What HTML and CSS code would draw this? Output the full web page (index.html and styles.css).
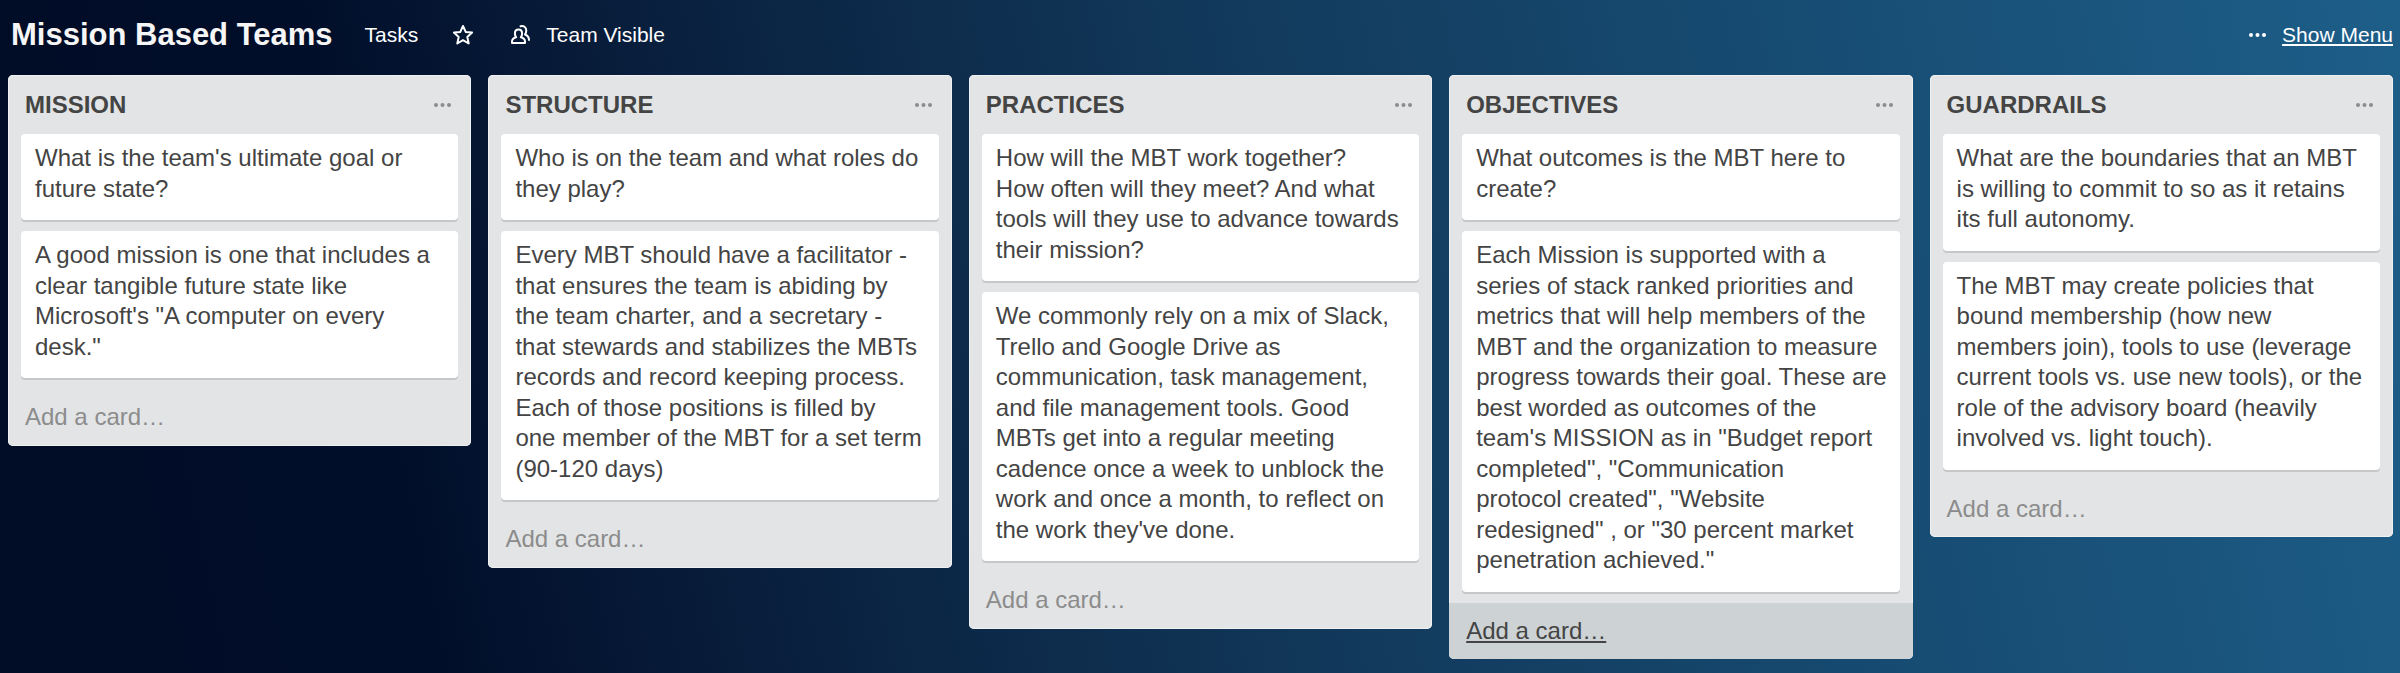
FILE: index.html
```html
<!DOCTYPE html>
<html lang="en">
<head>
<meta charset="utf-8">
<title>Mission Based Teams</title>
<link rel="stylesheet" href="styles.css">
</head>
<body>
<header class="board-header">
  <h1 class="board-title">Mission Based Teams</h1>
  <a class="header-link" href="#">Tasks</a>
  <button class="header-button" type="button" aria-label="Star board">
    <svg class="icon" viewBox="0 0 22 22" aria-hidden="true"><path d="M11 2l2.700 5.900 6.400.7-4.800 4.300 1.400 6.600L11 16.200l-5.700 3.300 1.400-6.600L1.900 8.600l6.400-.7z"/></svg>
  </button>
  <button class="header-button visibility" type="button">
    <svg class="icon" viewBox="0 0 22 22" aria-hidden="true"><path d="M2 19v-1.500c0-2.300 1.500-3.500 4.200-4.200C5.300 12.200 4.900 11 4.900 9.500 4.900 7 6.300 5.500 8.500 5.500s3.600 1.500 3.600 4c0 1.500-.4 2.700-1.300 3.800 2.700.7 4.200 1.900 4.200 4.200V19z"/><path d="M10.500 2.300c3-1 5.800.8 5.800 4.200 0 1.600-.4 2.900-1.300 4 2.600 1 4 2.700 4 5.500"/></svg>
    Team Visible
  </button>
  <button class="header-button show-menu" type="button">
    <svg class="dots" viewBox="0 0 17 4" aria-hidden="true"><circle cx="2" cy="2" r="2"/><circle cx="8.500" cy="2" r="2"/><circle cx="15" cy="2" r="2"/></svg>
    <span class="show-menu-label">Show Menu</span>
  </button>
</header>
<main class="board">
  <section class="list">
    <div class="list-header"><h2 class="list-title">MISSION</h2><button class="list-menu" type="button" aria-label="List actions"><svg class="dots" viewBox="0 0 17 4" aria-hidden="true"><circle cx="2" cy="2" r="2"/><circle cx="8.500" cy="2" r="2"/><circle cx="15" cy="2" r="2"/></svg></button></div>
    <div class="cards">
      <article class="card">What is the team's ultimate goal or future state?</article>
      <article class="card">A good mission is one that includes a clear tangible future state like Microsoft's "A computer on every desk."</article>
    </div>
    <button class="add-card" type="button">Add a card…</button>
  </section>
  <section class="list">
    <div class="list-header"><h2 class="list-title">STRUCTURE</h2><button class="list-menu" type="button" aria-label="List actions"><svg class="dots" viewBox="0 0 17 4" aria-hidden="true"><circle cx="2" cy="2" r="2"/><circle cx="8.500" cy="2" r="2"/><circle cx="15" cy="2" r="2"/></svg></button></div>
    <div class="cards">
      <article class="card">Who is on the team and what roles do they play?</article>
      <article class="card">Every MBT should have a facilitator - that ensures the team is abiding by<br>the team charter, and a secretary -<br>that stewards and stabilizes the MBTs records and record keeping process. Each of those positions is filled by<br>one member of the MBT for a set term<br>(90-120 days)</article>
    </div>
    <button class="add-card" type="button">Add a card…</button>
  </section>
  <section class="list">
    <div class="list-header"><h2 class="list-title">PRACTICES</h2><button class="list-menu" type="button" aria-label="List actions"><svg class="dots" viewBox="0 0 17 4" aria-hidden="true"><circle cx="2" cy="2" r="2"/><circle cx="8.500" cy="2" r="2"/><circle cx="15" cy="2" r="2"/></svg></button></div>
    <div class="cards">
      <article class="card">How will the MBT work together?<br>How often will they meet? And what<br>tools will they use to advance towards their mission?</article>
      <article class="card">We commonly rely on a mix of Slack, Trello and Google Drive as communication, task management, and file management tools. Good MBTs get into a regular meeting cadence once a week to unblock the work and once a month, to reflect on the work they've done.</article>
    </div>
    <button class="add-card" type="button">Add a card…</button>
  </section>
  <section class="list">
    <div class="list-header"><h2 class="list-title">OBJECTIVES</h2><button class="list-menu" type="button" aria-label="List actions"><svg class="dots" viewBox="0 0 17 4" aria-hidden="true"><circle cx="2" cy="2" r="2"/><circle cx="8.500" cy="2" r="2"/><circle cx="15" cy="2" r="2"/></svg></button></div>
    <div class="cards">
      <article class="card">What outcomes is the MBT here to create?</article>
      <article class="card">Each Mission is supported with a series of stack ranked priorities and metrics that will help members of the MBT and the organization to measure progress towards their goal. These are best worded as outcomes of the team's MISSION as in "Budget report completed", "Communication<br>protocol created", "Website<br>redesigned" , or "30 percent market penetration achieved."</article>
    </div>
    <button class="add-card add-card-active" type="button">Add a card…</button>
  </section>
  <section class="list">
    <div class="list-header"><h2 class="list-title">GUARDRAILS</h2><button class="list-menu" type="button" aria-label="List actions"><svg class="dots" viewBox="0 0 17 4" aria-hidden="true"><circle cx="2" cy="2" r="2"/><circle cx="8.500" cy="2" r="2"/><circle cx="15" cy="2" r="2"/></svg></button></div>
    <div class="cards">
      <article class="card">What are the boundaries that an MBT is willing to commit to so as it retains its full autonomy.</article>
      <article class="card">The MBT may create policies that bound membership (how new members join), tools to use (leverage current tools vs. use new tools), or the role of the advisory board (heavily involved vs. light touch).</article>
    </div>
    <button class="add-card" type="button">Add a card…</button>
  </section>
</main>
</body>
</html>
```
FILE: styles.css
```css
* {
  box-sizing: border-box;
}

body {
  margin: 0;
  min-height: 100vh;
  background: linear-gradient(78deg, #010c26 0%, #010e29 17%, #0b2443 35%, #123a5c 54%, #174c73 76%, #1d5e88 100%);
  color: #444;
  font-family: "Helvetica Neue", "Liberation Sans", Arial, sans-serif;
  font-size: 24px;
  line-height: 1.27;
}

button {
  border: 0;
  background: none;
  color: inherit;
  font: inherit;
  cursor: pointer;
}

.board-header {
  display: flex;
  align-items: center;
  height: 70px;
  padding: 0 7px 0 8px;
  color: #fff;
  font-size: 21px;
}

.board-title {
  margin: 0 32px 0 3px;
  font-size: 31px;
  color: #f6f6f6;
}

.header-link {
  margin-right: 34px;
  color: inherit;
  text-decoration: none;
}

.header-button {
  display: flex;
  align-items: center;
  padding: 0;
}

.visibility {
  gap: 14px;
  margin-left: 36px;
}

.show-menu {
  gap: 16px;
  margin-left: auto;
}

.show-menu-label {
  text-decoration: underline;
  text-decoration-thickness: 2px;
  text-underline-offset: 2px;
}

.icon {
  width: 22px;
  height: 22px;
  fill: none;
  stroke: currentColor;
  stroke-width: 2;
  stroke-linejoin: round;
  stroke-linecap: round;
}

.dots {
  display: block;
  width: 17px;
  height: 4px;
  fill: currentColor;
}

.board {
  display: grid;
  grid-template-columns: repeat(5, 1fr);
  align-items: start;
  gap: 17px;
  padding: 5px 7px 13px 8px;
}

.list {
  overflow: hidden;
  border-radius: 5px;
  background: #e2e4e6;
  box-shadow: inset 0 0 0 1px #eff0f2;
}

.list-header {
  display: flex;
  align-items: center;
  justify-content: space-between;
  padding: 15px 20px 14px 17px;
}

.list-title {
  margin: 0;
  font-size: 24px;
}

.list-menu {
  padding: 0;
  color: #8c8c8c;
}

.cards {
  display: grid;
  gap: 11px;
  padding: 0 13px 11px;
}

.card {
  padding: 9px 10px 16px 14px;
  border-radius: 4px;
  background: #fff;
  box-shadow: 0 2px 0 #c5c7c9;
}

.add-card {
  display: block;
  width: 100%;
  padding: 13px 17px;
  color: #8c8c8c;
  text-align: left;
}

.add-card-active {
  background: #cdd2d4;
  color: #444;
  text-decoration: underline;
  text-decoration-thickness: 2px;
  text-underline-offset: 2px;
}
```
